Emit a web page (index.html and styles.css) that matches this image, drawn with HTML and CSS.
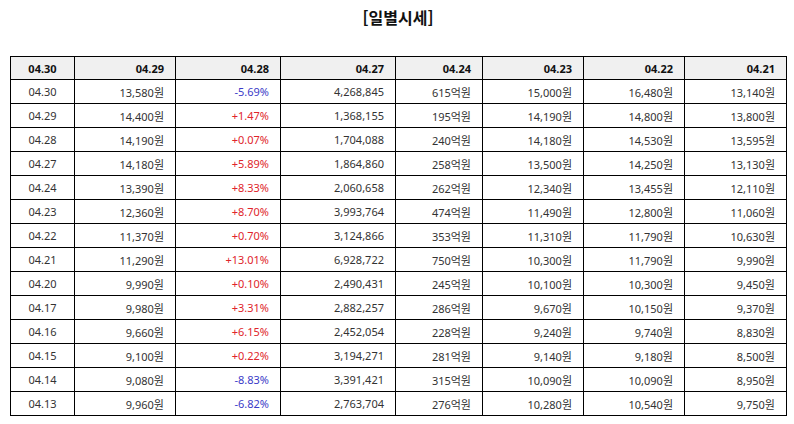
FILE: index.html
```html
<!DOCTYPE html>
<html lang="ko">
<head>
<meta charset="utf-8">
<link rel="stylesheet" href="styles.css">
</head>
<body>
<div class="page">
  <h1 class="title">[일별시세]</h1>
  <table class="quotes">
    <colgroup>
      <col class="c1"><col class="c2"><col class="c3"><col class="c4"><col class="c5"><col class="c6"><col class="c7"><col class="c8">
    </colgroup>
    <thead>
      <tr><th>04.30</th><th>04.29</th><th>04.28</th><th>04.27</th><th>04.24</th><th>04.23</th><th>04.22</th><th>04.21</th></tr>
    </thead>
    <tbody>
      <tr><td>04.30</td><td>13,580원</td><td class="down">-5.69%</td><td>4,268,845</td><td>615억원</td><td>15,000원</td><td>16,480원</td><td>13,140원</td></tr>
      <tr><td>04.29</td><td>14,400원</td><td class="up">+1.47%</td><td>1,368,155</td><td>195억원</td><td>14,190원</td><td>14,800원</td><td>13,800원</td></tr>
      <tr><td>04.28</td><td>14,190원</td><td class="up">+0.07%</td><td>1,704,088</td><td>240억원</td><td>14,180원</td><td>14,530원</td><td>13,595원</td></tr>
      <tr><td>04.27</td><td>14,180원</td><td class="up">+5.89%</td><td>1,864,860</td><td>258억원</td><td>13,500원</td><td>14,250원</td><td>13,130원</td></tr>
      <tr><td>04.24</td><td>13,390원</td><td class="up">+8.33%</td><td>2,060,658</td><td>262억원</td><td>12,340원</td><td>13,455원</td><td>12,110원</td></tr>
      <tr><td>04.23</td><td>12,360원</td><td class="up">+8.70%</td><td>3,993,764</td><td>474억원</td><td>11,490원</td><td>12,800원</td><td>11,060원</td></tr>
      <tr><td>04.22</td><td>11,370원</td><td class="up">+0.70%</td><td>3,124,866</td><td>353억원</td><td>11,310원</td><td>11,790원</td><td>10,630원</td></tr>
      <tr><td>04.21</td><td>11,290원</td><td class="up">+13.01%</td><td>6,928,722</td><td>750억원</td><td>10,300원</td><td>11,790원</td><td>9,990원</td></tr>
      <tr><td>04.20</td><td>9,990원</td><td class="up">+0.10%</td><td>2,490,431</td><td>245억원</td><td>10,100원</td><td>10,300원</td><td>9,450원</td></tr>
      <tr><td>04.17</td><td>9,980원</td><td class="up">+3.31%</td><td>2,882,257</td><td>286억원</td><td>9,670원</td><td>10,150원</td><td>9,370원</td></tr>
      <tr><td>04.16</td><td>9,660원</td><td class="up">+6.15%</td><td>2,452,054</td><td>228억원</td><td>9,240원</td><td>9,740원</td><td>8,830원</td></tr>
      <tr><td>04.15</td><td>9,100원</td><td class="up">+0.22%</td><td>3,194,271</td><td>281억원</td><td>9,140원</td><td>9,180원</td><td>8,500원</td></tr>
      <tr><td>04.14</td><td>9,080원</td><td class="down">-8.83%</td><td>3,391,421</td><td>315억원</td><td>10,090원</td><td>10,090원</td><td>8,950원</td></tr>
      <tr><td>04.13</td><td>9,960원</td><td class="down">-6.82%</td><td>2,763,704</td><td>276억원</td><td>10,280원</td><td>10,540원</td><td>9,750원</td></tr>
    </tbody>
  </table>
</div>
</body>
</html>
```
FILE: styles.css
```css
html, body {
  margin: 0;
  padding: 0;
  background: #fff;
}
.page {
  padding: 0 8px 0 10px;
  font-family: "Noto Sans", "Noto Sans CJK KR", sans-serif;
  color: #333;
}
.title {
  margin: 0;
  height: 56px;
  padding-top: 6px;
  box-sizing: border-box;
  font-size: 16px;
  font-weight: bold;
  color: #111;
  text-align: center;
  font-family: "Noto Sans CJK KR", sans-serif;
  line-height: 22px;
}
.quotes {
  border-collapse: collapse;
  table-layout: fixed;
  width: 776px;
  font-size: 11px;
}
.c1 { width: 64px; }
.c2 { width: 101px; }
.c3 { width: 105px; }
.c4 { width: 115px; }
.c5 { width: 87px; }
.c6 { width: 101px; }
.c7 { width: 101px; }
.c8 { width: 102px; }
.quotes th, .quotes td {
  border: 1px solid #000;
  padding: 0 11px 0 4px;
  text-align: right;
  white-space: nowrap;
}
.quotes th {
  height: 22px;
  background: #f0f0f0;
  font-weight: bold;
  color: #111;
}
.quotes td {
  height: 23px;
}
.quotes th:first-child, .quotes td:first-child {
  text-align: center;
  padding: 0;
}
.up { color: #e0252b; }
.down { color: #3b3bc8; }
```
